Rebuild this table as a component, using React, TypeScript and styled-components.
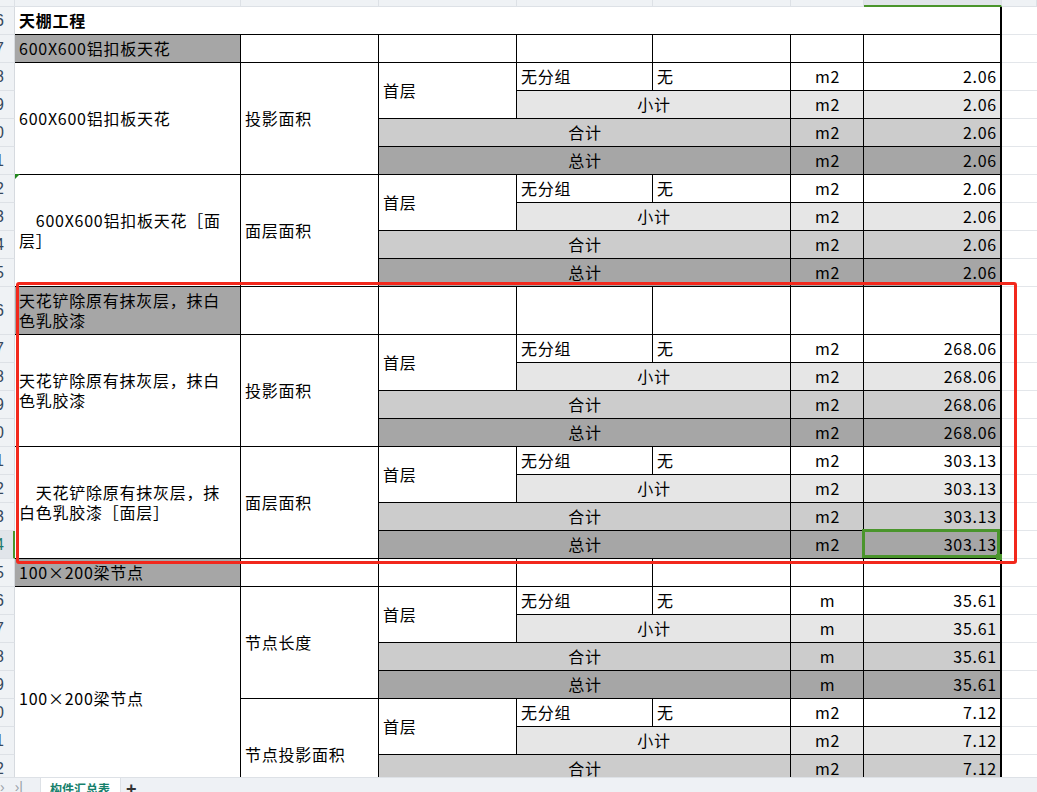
import React from "react";
import styled, { createGlobalStyle } from "styled-components";

const GlobalStyle = createGlobalStyle`
  html, body { margin: 0; padding: 0; background: #fff; }
  body { font-family: "Noto Sans CJK SC", "Noto Sans", sans-serif; }
`;

const G1 = "#e6e6e6";
const G2 = "#cccccc";
const G3 = "#a6a6a6";
const GREEN = "#4a952c";

const FIRST_ROW = 6;
const LAST_ROW = 33;
const rowHeights: number[] = [];
for (let r = FIRST_ROW; r <= LAST_ROW; r++) rowHeights.push(r === 16 ? 48 : 28);
const gridRows = ["7px", ...rowHeights.map((h) => `${h}px`)].join(" ");

type Align = "l" | "c" | "r";
type Mark = "tri" | "sel";
type Spec = {
  r: number;
  rs?: number;
  c: number;
  cs?: number;
  text?: string;
  align?: Align;
  bg?: string;
  bold?: boolean;
  mark?: Mark;
};

const cells: Spec[] = [];
cells.push({ r: 6, c: 0, cs: 7, text: "天棚工程", bold: true });

function section(r: number, text: string) {
  cells.push({ r, c: 0, text, bg: G3 });
  for (let c = 1; c <= 6; c++) cells.push({ r, c });
}
function item(r: number, rs: number, text: string, mark?: Mark) {
  cells.push({ r, rs, c: 0, text, mark });
}
function group(s: number, label: string, unit: string, value: string, sel = false) {
  cells.push({ r: s, rs: 4, c: 1, text: label });
  cells.push({ r: s, rs: 2, c: 2, text: "首层" });
  cells.push({ r: s, c: 3, text: "无分组" });
  cells.push({ r: s, c: 4, text: "无" });
  cells.push({ r: s, c: 5, text: unit, align: "c" });
  cells.push({ r: s, c: 6, text: value, align: "r" });
  cells.push({ r: s + 1, c: 3, cs: 2, text: "小计", align: "c", bg: G1 });
  cells.push({ r: s + 1, c: 5, text: unit, align: "c", bg: G1 });
  cells.push({ r: s + 1, c: 6, text: value, align: "r", bg: G1 });
  cells.push({ r: s + 2, c: 2, cs: 3, text: "合计", align: "c", bg: G2 });
  cells.push({ r: s + 2, c: 5, text: unit, align: "c", bg: G2 });
  cells.push({ r: s + 2, c: 6, text: value, align: "r", bg: G2 });
  cells.push({ r: s + 3, c: 2, cs: 3, text: "总计", align: "c", bg: G3 });
  cells.push({ r: s + 3, c: 5, text: unit, align: "c", bg: G3 });
  cells.push({ r: s + 3, c: 6, text: value, align: "r", bg: G3, mark: sel ? "sel" : undefined });
}

section(7, "600X600铝扣板天花");
item(8, 4, "600X600铝扣板天花");
group(8, "投影面积", "m2", "2.06");
item(12, 4, "　600X600铝扣板天花［面\n层］", "tri");
group(12, "面层面积", "m2", "2.06");
section(16, "天花铲除原有抹灰层，抹白\n色乳胶漆");
item(17, 4, "天花铲除原有抹灰层，抹白\n色乳胶漆");
group(17, "投影面积", "m2", "268.06");
item(21, 4, "　天花铲除原有抹灰层，抹\n白色乳胶漆［面层］");
group(21, "面层面积", "m2", "303.13", true);
section(25, "100×200梁节点");
item(26, 8, "100×200梁节点");
group(26, "节点长度", "m", "35.61");
group(30, "节点投影面积", "m2", "7.12");

const Page = styled.div`
  position: relative;
  width: 1037px;
  height: 792px;
  overflow: hidden;
  display: flex;
  flex-direction: column;
  background: #fff;
`;

const SheetArea = styled.div`
  flex: 1;
  overflow: hidden;
`;

const SheetGrid = styled.div`
  display: grid;
  grid-template-columns: 15px 226px 138px 138px 136px 138px 73px 138px 1fr;
  grid-template-rows: ${gridRows};
`;

const ColHead = styled.div<{ $col: number; $active?: boolean }>`
  grid-row: 1;
  grid-column: ${(p) => p.$col};
  box-sizing: border-box;
  background: ${(p) => (p.$active ? "#e1e5ea" : "#eff2f5")};
  border-right: 1px solid #dde1e6;
  border-bottom: ${(p) => (p.$active ? `2px solid ${GREEN}` : "1px solid #dde1e6")};
`;

const RowHead = styled.div<{ $row: number; $active?: boolean }>`
  grid-row: ${(p) => p.$row};
  grid-column: 1;
  box-sizing: border-box;
  display: flex;
  justify-content: flex-end;
  align-items: center;
  padding-right: ${(p) => (p.$active ? 9 : 10)}px;
  overflow: hidden;
  white-space: nowrap;
  background: ${(p) => (p.$active ? "#e1e5ea" : "#eff2f5")};
  border-bottom: 1px solid #dde1e6;
  border-right: ${(p) => (p.$active ? `2px solid ${GREEN}` : "1px solid #d6dadf")};
  font-family: "Liberation Sans", "DejaVu Sans", sans-serif;
  font-size: 16px;
  color: ${(p) => (p.$active ? "#1f7a6c" : "#35475b")};
`;

const Ghost = styled.div<{ $row: number }>`
  grid-row: ${(p) => p.$row};
  grid-column: 9;
  border-bottom: 1px solid #e3e6ea;
`;

const justify: Record<Align, string> = { l: "flex-start", c: "center", r: "flex-end" };

const Cell = styled.div<{
  $r: number;
  $rs: number;
  $c: number;
  $cs: number;
  $bg: string;
  $align: Align;
  $edge: boolean;
  $bold: boolean;
}>`
  grid-row: ${(p) => p.$r} / span ${(p) => p.$rs};
  grid-column: ${(p) => p.$c} / span ${(p) => p.$cs};
  position: relative;
  box-sizing: border-box;
  display: flex;
  align-items: center;
  justify-content: ${(p) => justify[p.$align]};
  padding: 0 3px 1px 4px;
  background: ${(p) => p.$bg};
  border-right: ${(p) => (p.$edge ? 2 : 1)}px solid #000;
  border-bottom: 1px solid #000;
  font-size: 16px;
  letter-spacing: 0.75px;
  line-height: 20px;
  font-weight: ${(p) => (p.$bold ? 700 : 400)};
  color: #000;
  white-space: nowrap;
`;

const Triangle = styled.span`
  position: absolute;
  top: -1px;
  left: 0;
  width: 0;
  height: 0;
  border-top: 5px solid #23881f;
  border-right: 5px solid transparent;
`;

const Selection = styled.span`
  position: absolute;
  z-index: 2;
  top: -2px;
  left: -2px;
  right: 0;
  bottom: 0;
  border: 3px solid ${GREEN};
  pointer-events: none;
`;

const Handle = styled.span`
  position: absolute;
  z-index: 3;
  right: -5px;
  bottom: -5px;
  width: 6px;
  height: 6px;
  background: ${GREEN};
`;

const Annotation = styled.div`
  position: absolute;
  left: 16px;
  top: 282px;
  width: 1001px;
  height: 282px;
  box-sizing: border-box;
  border: 3px solid #f2281c;
  border-radius: 3px;
  z-index: 5;
  pointer-events: none;
`;

const TabBar = styled.div`
  height: 15px;
  flex-shrink: 0;
  box-sizing: border-box;
  display: flex;
  align-items: flex-start;
  background: #eef1f5;
  border-top: 1px solid #dde1e6;
  overflow: hidden;
`;

const Nav = styled.div`
  width: 40px;
  display: flex;
  gap: 10px;
  padding-top: 1px;
  font-family: "Liberation Sans", sans-serif;
  font-size: 14px;
  line-height: 16px;
  color: #9aa1a9;
`;

const Tab = styled.div`
  width: 81px;
  height: 20px;
  margin-top: -1px;
  box-sizing: border-box;
  padding: 4px 0 0 9px;
  background: #fff;
  border-left: 1px solid #dde1e6;
  border-right: 1px solid #dde1e6;
  font-size: 12px;
  line-height: 16px;
  font-weight: 700;
  color: #16806c;
  white-space: nowrap;
`;

const AddTab = styled.div`
  margin-left: 5px;
  padding-top: 2px;
  font-family: "Liberation Sans", sans-serif;
  font-size: 18px;
  font-weight: 700;
  line-height: 18px;
  color: #333;
`;

function renderText(text?: string) {
  if (!text) return null;
  const parts = text.split("\n");
  return (
    <span>
      {parts.map((p, i) => (
        <React.Fragment key={i}>
          {i > 0 && <br />}
          {p}
        </React.Fragment>
      ))}
    </span>
  );
}

export default function App() {
  const rows: number[] = [];
  for (let r = FIRST_ROW; r <= LAST_ROW; r++) rows.push(r);
  return (
    <Page>
      <GlobalStyle />
      <SheetArea>
        <SheetGrid>
          {Array.from({ length: 9 }, (_, i) => (
            <ColHead key={`h${i}`} $col={i + 1} $active={i === 7} />
          ))}
          {rows.map((r) => (
            <RowHead key={`r${r}`} $row={r - 4} $active={r === 24}>
              {r}
            </RowHead>
          ))}
          {rows.map((r) => (
            <Ghost key={`g${r}`} $row={r - 4} />
          ))}
          {cells.map((s, i) => {
            const cs = s.cs ?? 1;
            return (
              <Cell
                key={i}
                $r={s.r - 4}
                $rs={s.rs ?? 1}
                $c={s.c + 2}
                $cs={cs}
                $bg={s.bg ?? "#fff"}
                $align={s.align ?? "l"}
                $edge={s.c + cs - 1 === 6}
                $bold={!!s.bold}
              >
                {renderText(s.text)}
                {s.mark === "tri" && <Triangle />}
                {s.mark === "sel" && (
                  <Selection>
                    <Handle />
                  </Selection>
                )}
              </Cell>
            );
          })}
        </SheetGrid>
      </SheetArea>
      <TabBar>
        <Nav>
          <span>›</span>
          <span>›|</span>
        </Nav>
        <Tab>构件汇总表</Tab>
        <AddTab>+</AddTab>
      </TabBar>
      <Annotation />
    </Page>
  );
}
